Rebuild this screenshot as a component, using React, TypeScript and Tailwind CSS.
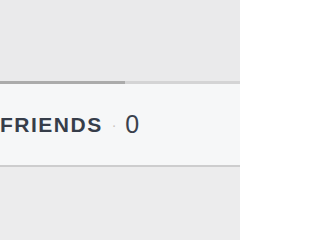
export default function App() {
  return (
    <div className="flex h-[240px] w-[240px] flex-col overflow-hidden bg-[#eaeaeb] font-['Liberation_Sans',Arial,sans-serif]">
      <div className="h-[81px]" />
      {/* top rule */}
      <div className="flex h-[3px]">
        <div className="w-[125px] bg-[#ababab]" />
        <div className="flex-1 bg-[#d4d4d5]" />
      </div>
      <div className="flex h-[81px] items-center bg-[#f6f7f8]">
        <span className="text-[21px] font-bold leading-none tracking-[1.5px] text-[#363d4a]">
          FRIENDS
        </span>
        <span className="ml-[9px] text-[14px] leading-none text-[#c9c3bd]">·</span>
        <span className="ml-[9px] text-[25px] leading-none text-[#3a414d]">0</span>
      </div>
      <div className="h-[2px] bg-[#cdcdce]" />
      <div className="flex-1 bg-[#ececed]" />
    </div>
  );
}
